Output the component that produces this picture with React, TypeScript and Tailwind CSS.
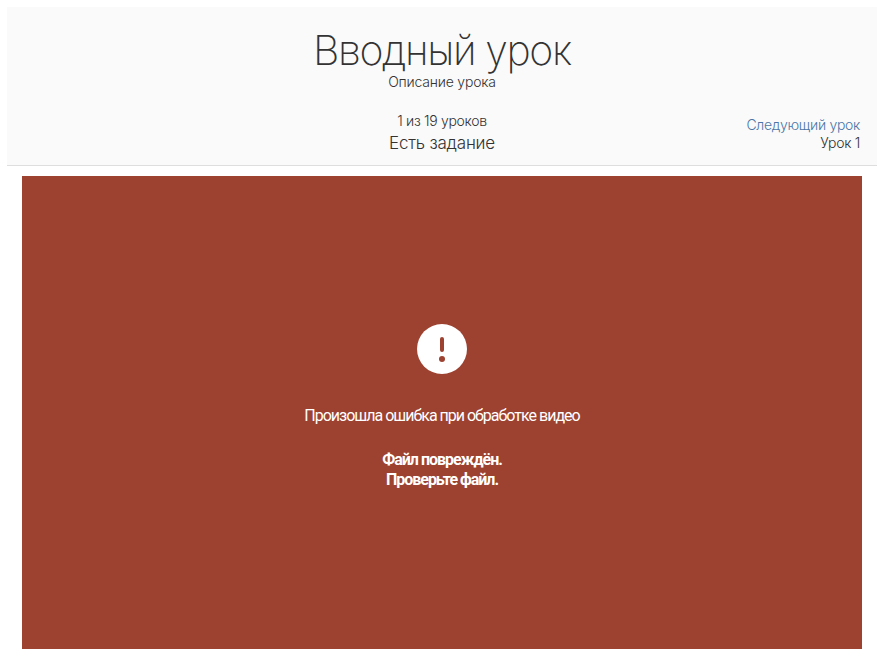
import React from 'react';

const App: React.FC = () => {
  return (
    <div className="min-h-[670px] bg-white p-[7px] pb-0 font-['Inter',sans-serif]">
      <header className="h-[159px] bg-[#fafafa] border-b border-[#dedede] flex flex-col items-center pt-[19px] text-[#333333]">
        <h1 className="text-[41px] leading-[48px] font-extralight tracking-[-1.4px]">Вводный урок</h1>
        <p className="text-sm leading-[16px] font-light tracking-[-0.2px]">Описание урока</p>
        <div className="w-full grid grid-cols-3 mt-[21px] px-[17px]">
          <div />
          <div className="text-center">
            <p className="text-sm leading-5 font-light tracking-[-0.3px]">1 из 19 уроков</p>
            <p className="text-[17px] leading-6 font-light tracking-[-0.2px]">Есть задание</p>
          </div>
          <div className="text-right text-sm leading-[18px] font-light tracking-[-0.3px] pt-[5px]">
            <a className="block text-[#4a76a8]">Следующий урок</a>
            <span className="block">Урок 1</span>
          </div>
        </div>
      </header>
      <main className="mx-[15px] mt-[10px] h-[473px] bg-[#9d4230] flex flex-col items-center pt-[148px] text-white font-['Roboto',sans-serif]">
        <div className="w-[50px] h-[50px] rounded-full bg-white flex flex-col items-center justify-center gap-[4px]">
          <div className="w-[4px] h-[15px] rounded-full bg-[#9d4230]" />
          <div className="w-[6px] h-[6px] rounded-full bg-[#9d4230]" />
        </div>
        <p className="mt-[32px] text-base leading-5 font-normal tracking-[-1px]">Произошла ошибка при обработке видео</p>
        <p className="mt-[24px] text-base leading-[20px] font-bold tracking-[-1px] text-center">
          Файл повреждён.
          <br />
          Проверьте файл.
        </p>
      </main>
    </div>
  );
};

export default App;
